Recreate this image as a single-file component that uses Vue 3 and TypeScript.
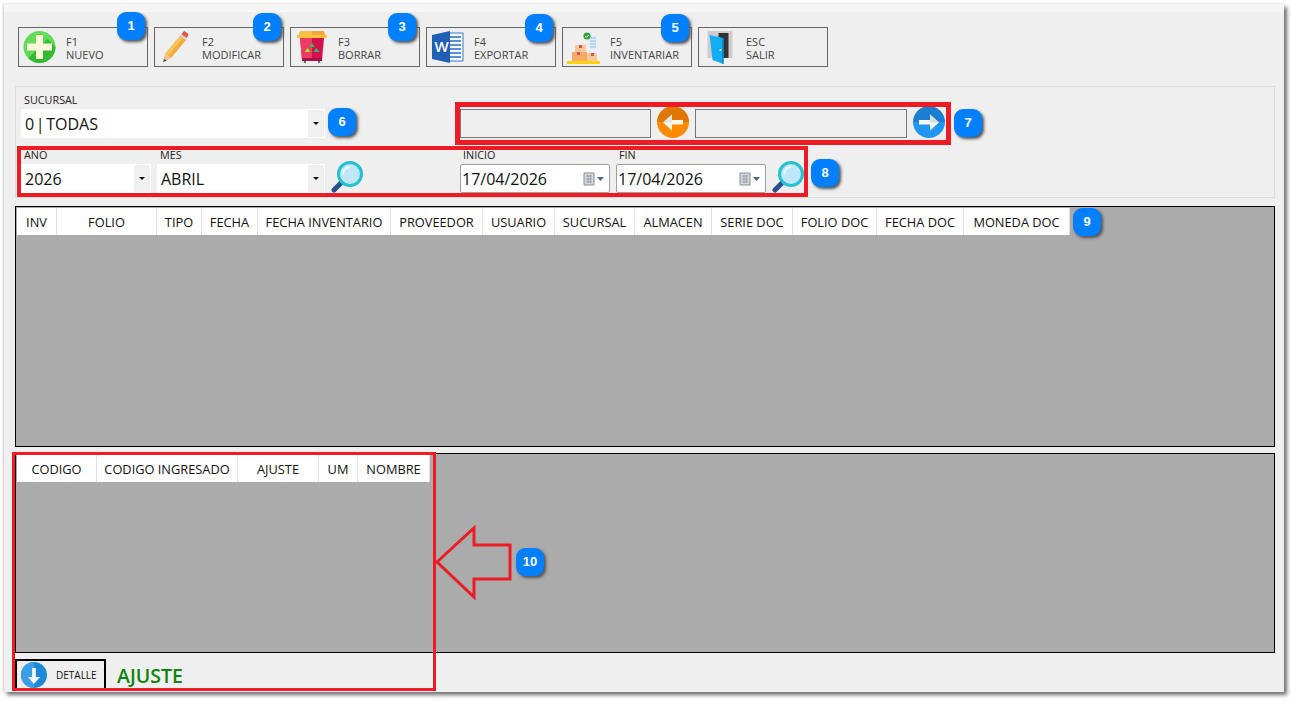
<script setup lang="ts">
interface ToolButton {
  key: string
  label: string
  icon: string
}
interface Column {
  title: string
  width: number
}
interface Badge {
  n: number
  x: number
  y: number
}

const toolButtons: ToolButton[] = [
  { key: 'F1', label: 'NUEVO', icon: 'plus' },
  { key: 'F2', label: 'MODIFICAR', icon: 'pencil' },
  { key: 'F3', label: 'BORRAR', icon: 'bin' },
  { key: 'F4', label: 'EXPORTAR', icon: 'word' },
  { key: 'F5', label: 'INVENTARIAR', icon: 'boxes' },
  { key: 'ESC', label: 'SALIR', icon: 'door' }
]

const mainColumns: Column[] = [
  { title: 'INV', width: 40 },
  { title: 'FOLIO', width: 100 },
  { title: 'TIPO', width: 45 },
  { title: 'FECHA', width: 56 },
  { title: 'FECHA INVENTARIO', width: 133 },
  { title: 'PROVEEDOR', width: 92 },
  { title: 'USUARIO', width: 72 },
  { title: 'SUCURSAL', width: 80 },
  { title: 'ALMACEN', width: 77 },
  { title: 'SERIE DOC', width: 81 },
  { title: 'FOLIO DOC', width: 84 },
  { title: 'FECHA DOC', width: 87 },
  { title: 'MONEDA DOC', width: 106 }
]

const detailColumns: Column[] = [
  { title: 'CODIGO', width: 80 },
  { title: 'CODIGO INGRESADO', width: 141 },
  { title: 'AJUSTE', width: 81 },
  { title: 'UM', width: 39 },
  { title: 'NOMBRE', width: 72 }
]

// numeros de la guia, encima de la pantalla
const badges: Badge[] = [
  { n: 1, x: 117, y: 12 },
  { n: 2, x: 253, y: 13 },
  { n: 3, x: 388, y: 13 },
  { n: 4, x: 525, y: 14 },
  { n: 5, x: 661, y: 14 },
  { n: 6, x: 328, y: 108 },
  { n: 7, x: 954, y: 109 },
  { n: 8, x: 811, y: 159 },
  { n: 9, x: 1073, y: 208 },
  { n: 10, x: 516, y: 548 }
]
</script>

<template>
  <div class="screen">
    <div class="window">
      <div class="toolbar">
        <button v-for="b in toolButtons" :key="b.key" class="tool-btn">
          <span class="tool-icon">
            <svg v-if="b.icon === 'plus'" viewBox="0 0 34 34" width="34" height="34">
              <circle cx="16.500" cy="17" r="16" fill="#62dc58" />
              <path d="M27.800 28.300A16 16 0 0 1 5.200 28.300L8.500 25 24.500 9 32.500 17A16 16 0 0 1 27.800 28.300Z" fill="#35b832" />
              <path d="M13 5h7v8.500h9v7h-9V29h-7v-8.500H4v-7h9Z" fill="#fdf8d8" />
            </svg>
            <svg v-else-if="b.icon === 'pencil'" viewBox="0 0 34 34" width="34" height="34">
              <path d="M21 6l6 4L12 28l-6-4Z" fill="#f3a93c" />
              <path d="M21 6l3 2L9 26l-3-2Z" fill="#f8c45c" />
              <path d="M6 24l6 4-8 4Z" fill="#eec39a" />
              <path d="M5.300 29l2.500 1.500L4 32Z" fill="#39404a" />
              <path d="M24 2l1.500-1 4 3-.5 2-1.500 2-5-3.500Z" fill="#e2574c" />
              <path d="M22.500 4.500l5.500 4-1 1.500-6-4Z" fill="#cfd4d8" />
            </svg>
            <svg v-else-if="b.icon === 'bin'" viewBox="0 0 32 34" width="32" height="34">
              <path d="M4 8h24l-2 22H6Z" fill="#d5104f" />
              <path d="M4 8h12v22H6Z" fill="#ee3a64" />
              <path d="M6 28h20v3H6Z" fill="#a90f48" />
              <path d="M8 31h2v2H8ZM22 31h2v2h-2Z" fill="#6d6d6d" />
              <path d="M4 1h24l1 4H3Z" fill="#f4a63a" />
              <path d="M4 1h12v4H3Z" fill="#fbbd4b" />
              <path d="M1 5h30v3H1Z" fill="#fcc43d" />
              <path d="M16 13l3 4h-6Z" fill="#21c560" />
              <path d="M11.500 18l3 4h-6Z" fill="#a6df2d" />
              <path d="M20.500 18l3 4h-6Z" fill="#21c560" />
            </svg>
            <svg v-else-if="b.icon === 'word'" viewBox="0 0 34 34" width="34" height="34">
              <path d="M13 3h19v28H13Z" fill="#f5f8fc" stroke="#3a78c8" stroke-width="1" />
              <path d="M19 7h11M19 11h11M19 15h11M19 19h11M19 23h11M19 27h11" stroke="#5c90d4" stroke-width="1.800" />
              <path d="M1 5l18-4v32L1 29Z" fill="#1f5fb5" />
              <text x="3.500" y="22" class="word-letter">W</text>
            </svg>
            <svg v-else-if="b.icon === 'boxes'" viewBox="0 0 34 34" width="34" height="34">
              <path d="M21 4h10v16H21Z" fill="#e4effa" />
              <path d="M23 8h6M23 11h6M23 14h6M23 17h6" stroke="#8cb8e4" stroke-width="1.200" />
              <circle cx="20" cy="6" r="3.600" fill="#31a53a" />
              <path d="M18.300 6l1.300 1.300 2.300-2.500" stroke="#fff" stroke-width="1" fill="none" />
              <path d="M8 15h11v8H8Z" fill="#f8c898" />
              <path d="M5 22h15v10H5Z" fill="#f5aa66" />
              <path d="M20 23h10v9H20Z" fill="#f8c898" />
              <path d="M12 15h3v3h-3ZM10 22h3v3h-3ZM24 23h3v3h-3Z" fill="#ea4a5e" />
              <path d="M0 31h33v3H0Z" fill="#fbd20f" />
            </svg>
            <svg v-else viewBox="0 0 34 34" width="34" height="34">
              <path d="M4.500 1h25v27h-25Z" fill="#d0cccc" />
              <path d="M15.500 3h10v25h-10Z" fill="#333" />
              <path d="M6.500 5l14 3v26l-11-4Z" fill="#12aef5" />
              <path d="M19 7.700l1.500.3v26l-1.500-.5Z" fill="#0b86d0" />
              <circle cx="17.500" cy="20" r="1" fill="#fff" />
            </svg>
          </span>
          <span class="tool-text">{{ b.key }}<br />{{ b.label }}</span>
        </button>
      </div>

      <div class="filters">
        <div class="filter-left">
          <div class="field">
            <label>SUCURSAL</label>
            <div class="combo combo-wide"><span class="tight">0 | TODAS</span><i class="combo-arrow"></i></div>
          </div>
        </div>
        <div class="nav-row">
          <div class="nav-input nav-first"></div>
          <span class="round-btn orange">
            <svg viewBox="0 0 32 32" width="32" height="32">
              <path d="M6 16.500l9-8v5.500h11v4.500H15v6Z" fill="#fff6e8" />
              <path d="M6 16.500l9-8v8Z" fill="#e4e4e4" />
            </svg>
          </span>
          <div class="nav-input nav-second"></div>
          <span class="round-btn blue">
            <svg viewBox="0 0 32 32" width="32" height="32">
              <path d="M26 16.500l-9-8v5.500H6v4.500h11v6Z" fill="#f2f8fd" />
              <path d="M26 16.500l-9-8v8Z" fill="#dcdcdc" />
            </svg>
          </span>
        </div>

        <div class="filter-left row">
          <div class="field">
            <label>AÑO</label>
            <div class="combo combo-year"><span>2026</span><i class="combo-arrow"></i></div>
          </div>
          <div class="field">
            <label>MES</label>
            <div class="combo combo-month"><span>ABRIL</span><i class="combo-arrow"></i></div>
          </div>
          <svg class="lens" viewBox="0 0 32 32" width="32" height="32">
            <path d="M10 22L3 29" stroke="#27508c" stroke-width="5" stroke-linecap="round" />
            <circle cx="19" cy="13" r="11.500" fill="#bfe6fb" stroke="#24c1cf" stroke-width="3" />
            <path d="M12 13a7 7 0 0 1 7-7" stroke="#e8f7ff" stroke-width="2" fill="none" />
          </svg>
        </div>
        <div class="row">
          <div class="field">
            <label>INICIO</label>
            <div class="date-box">
              <span>17/04/2026</span>
              <svg viewBox="0 0 22 14" width="22" height="14">
                <path d="M1 1h10v12H1Z" fill="#d4d8dc" stroke="#8a8f96" />
                <path d="M3 4h6M3 7h6M3 10h6M5 3v8M7.500 3v8" stroke="#8a8f96" stroke-width=".7" />
                <path d="M14 5h7l-3.500 4Z" fill="#54688a" />
              </svg>
            </div>
          </div>
          <div class="field">
            <label>FIN</label>
            <div class="date-box">
              <span>17/04/2026</span>
              <svg viewBox="0 0 22 14" width="22" height="14">
                <path d="M1 1h10v12H1Z" fill="#d4d8dc" stroke="#8a8f96" />
                <path d="M3 4h6M3 7h6M3 10h6M5 3v8M7.500 3v8" stroke="#8a8f96" stroke-width=".7" />
                <path d="M14 5h7l-3.500 4Z" fill="#54688a" />
              </svg>
            </div>
          </div>
          <svg class="lens" viewBox="0 0 32 32" width="32" height="32">
            <path d="M10 22L3 29" stroke="#27508c" stroke-width="5" stroke-linecap="round" />
            <circle cx="19" cy="13" r="11.500" fill="#bfe6fb" stroke="#24c1cf" stroke-width="3" />
            <path d="M12 13a7 7 0 0 1 7-7" stroke="#e8f7ff" stroke-width="2" fill="none" />
          </svg>
        </div>
      </div>

      <div class="grid grid-main">
        <div class="grid-head">
          <div v-for="c in mainColumns" :key="c.title" class="grid-col" :style="{ width: c.width + 'px' }">{{ c.title }}</div>
        </div>
      </div>

      <div class="grid grid-detail">
        <div class="grid-head">
          <div v-for="c in detailColumns" :key="c.title" class="grid-col" :style="{ width: c.width + 'px' }">{{ c.title }}</div>
        </div>
      </div>

      <div class="footer">
        <button class="detail-btn">
          <svg viewBox="0 0 26 26" width="26" height="26">
            <circle cx="13" cy="13" r="13" fill="#1e88d8" />
            <path d="M13 0a13 13 0 0 0 0 26Z" fill="#3a9fe6" />
            <path d="M13 22l-6-7h4.200V6h3.600v9H19Z" fill="#fff" />
          </svg>
          <span>DETALLE</span>
        </button>
        <span class="footer-title">AJUSTE</span>
      </div>
    </div>

    <!-- marcas de la guia -->
    <div class="mark mark-nav"></div>
    <div class="mark mark-dates"></div>
    <div class="mark mark-detail"></div>
    <svg class="mark-arrow" viewBox="0 0 80 76" width="80" height="76">
      <path d="M3 37L40 3V20H76V54H40V72Z" fill="none" stroke="#ed1c24" stroke-width="3" />
    </svg>
    <div
      v-for="b in badges"
      :key="b.n"
      class="badge"
      :style="{ left: b.x + 'px', top: b.y + 'px' }"
    >{{ b.n }}</div>
  </div>
</template>

<style>
body {
  background: #fff;
}
</style>

<style scoped>
.screen {
  position: relative;
  width: 1292px;
  height: 701px;
  overflow: hidden;
  padding: 4px 0 0 4px;
  box-sizing: border-box;
  font-family: "Open Sans", "Noto Sans", sans-serif;
}

.window {
  width: 1280px;
  height: 688px;
  box-sizing: border-box;
  background: #efefef;
  border-top: 8px solid #f6f6f6;
  padding: 15px 9px 0 11px;
  box-shadow: 3px 3px 4px #707070, -1px 0 2px #d0d0d0;
}

.toolbar {
  display: flex;
  gap: 6px;
  margin-left: 3px;
}

.tool-btn {
  display: flex;
  align-items: center;
  width: 130px;
  height: 40px;
  padding: 0;
  border: 1px solid #666;
  background: transparent;
  font-family: inherit;
  text-align: left;
}

.tool-icon {
  display: flex;
  justify-content: center;
  width: 41px;
  flex: none;
}

.tool-text {
  margin: 2px 0 0 6px;
  font-size: 11px;
  line-height: 13px;
  color: #444;
}

.word-letter {
  font-family: "Open Sans", sans-serif;
  font-size: 15px;
  font-weight: 600;
  fill: #fff;
}

.filters {
  display: grid;
  grid-template-columns: 439px 1fr;
  grid-template-rows: 44px 44px;
  row-gap: 11px;
  height: 112px;
  margin-top: 19px;
  padding: 7px 0 0 5px;
  box-sizing: border-box;
  border: 1px solid #dcdcdc;
}

.row {
  display: flex;
  align-items: flex-end;
  gap: 6px;
}

.field {
  display: flex;
  flex-direction: column;
}

.field label {
  height: 15px;
  margin-left: 3px;
  font-size: 10.8px;
  line-height: 11px;
  color: #222;
}

.combo {
  display: flex;
  align-items: center;
  justify-content: space-between;
  height: 29px;
  background: #fff;
  font-size: 16px;
  color: #111;
}

.combo span {
  padding-left: 4px;
}

.combo span.tight {
  word-spacing: -2.5px;
}

.combo-wide {
  width: 304px;
}

.combo-year {
  width: 130px;
}

.combo-month {
  width: 168px;
}

.combo-arrow {
  position: relative;
  display: block;
  width: 16px;
  height: 27px;
  margin-right: 1px;
  background: #f0f0f0;
}

.combo-arrow::after {
  content: "";
  position: absolute;
  left: 5px;
  top: 12px;
  border-left: 3px solid transparent;
  border-right: 3px solid transparent;
  border-top: 3px solid #111;
}

.lens {
  flex: none;
}

.nav-row {
  display: flex;
  align-items: flex-end;
  gap: 6px;
}

.nav-input {
  height: 29px;
  box-sizing: border-box;
  border: 1px solid #777;
  background: #efefef;
}

.nav-first {
  width: 191px;
}

.nav-second {
  width: 212px;
}

.round-btn {
  display: block;
  width: 32px;
  height: 32px;
  border-radius: 50%;
}

.round-btn svg {
  display: block;
}

.orange {
  background: linear-gradient(180deg, #df7700 50%, #ff8a00 50%);
}

.blue {
  background: linear-gradient(180deg, #1a7fd0 50%, #2196f0 50%);
}

.date-box {
  display: flex;
  align-items: center;
  justify-content: space-between;
  width: 150px;
  height: 29px;
  box-sizing: border-box;
  padding: 0 4px 0 1px;
  border: 1px solid #a0a0a0;
  border-radius: 2px;
  background: #fff;
  font-size: 16px;
  color: #111;
}

.grid {
  box-sizing: border-box;
  border: 1px solid #000;
  padding: 1px;
  background: #ababab;
}

.grid-main {
  height: 241px;
  margin-top: 8px;
}

.grid-detail {
  height: 200px;
  margin-top: 6px;
}

.grid-head {
  display: flex;
  height: 27px;
}

.grid-col {
  flex: none;
  box-sizing: border-box;
  height: 27px;
  background: #fff;
  border-right: 1px solid #e2e2e2;
  font-size: 12.8px;
  line-height: 29px;
  text-align: center;
  color: #111;
}

.footer {
  display: flex;
  align-items: center;
  gap: 11px;
  margin-top: 6px;
}

.detail-btn {
  display: flex;
  align-items: center;
  width: 91px;
  height: 32px;
  padding: 0 0 0 4px;
  box-sizing: border-box;
  border: 2px solid #000;
  background: transparent;
  font-family: inherit;
}

.detail-btn span {
  margin-left: 9px;
  font-size: 10px;
  color: #111;
}

.footer-title {
  font-size: 19.5px;
  font-weight: 600;
  color: #0a850a;
}

.mark {
  position: absolute;
  box-sizing: border-box;
  border: 3px solid #ed1c24;
}

.mark-nav {
  left: 455px;
  top: 102px;
  width: 496px;
  height: 43px;
  border-width: 5px;
}

.mark-dates {
  left: 17px;
  top: 146px;
  width: 791px;
  height: 51px;
  border-width: 4px;
}

.mark-detail {
  left: 12px;
  top: 452px;
  width: 424px;
  height: 239px;
}

.mark-arrow {
  position: absolute;
  left: 434px;
  top: 525px;
}

.badge {
  position: absolute;
  width: 28px;
  height: 28px;
  border-radius: 9px;
  background: #0080ff;
  box-shadow: 2px 2px 3px #555;
  font-family: "Liberation Sans", sans-serif;
  font-size: 13px;
  font-weight: 700;
  line-height: 28px;
  text-align: center;
  color: #fff;
}
</style>
